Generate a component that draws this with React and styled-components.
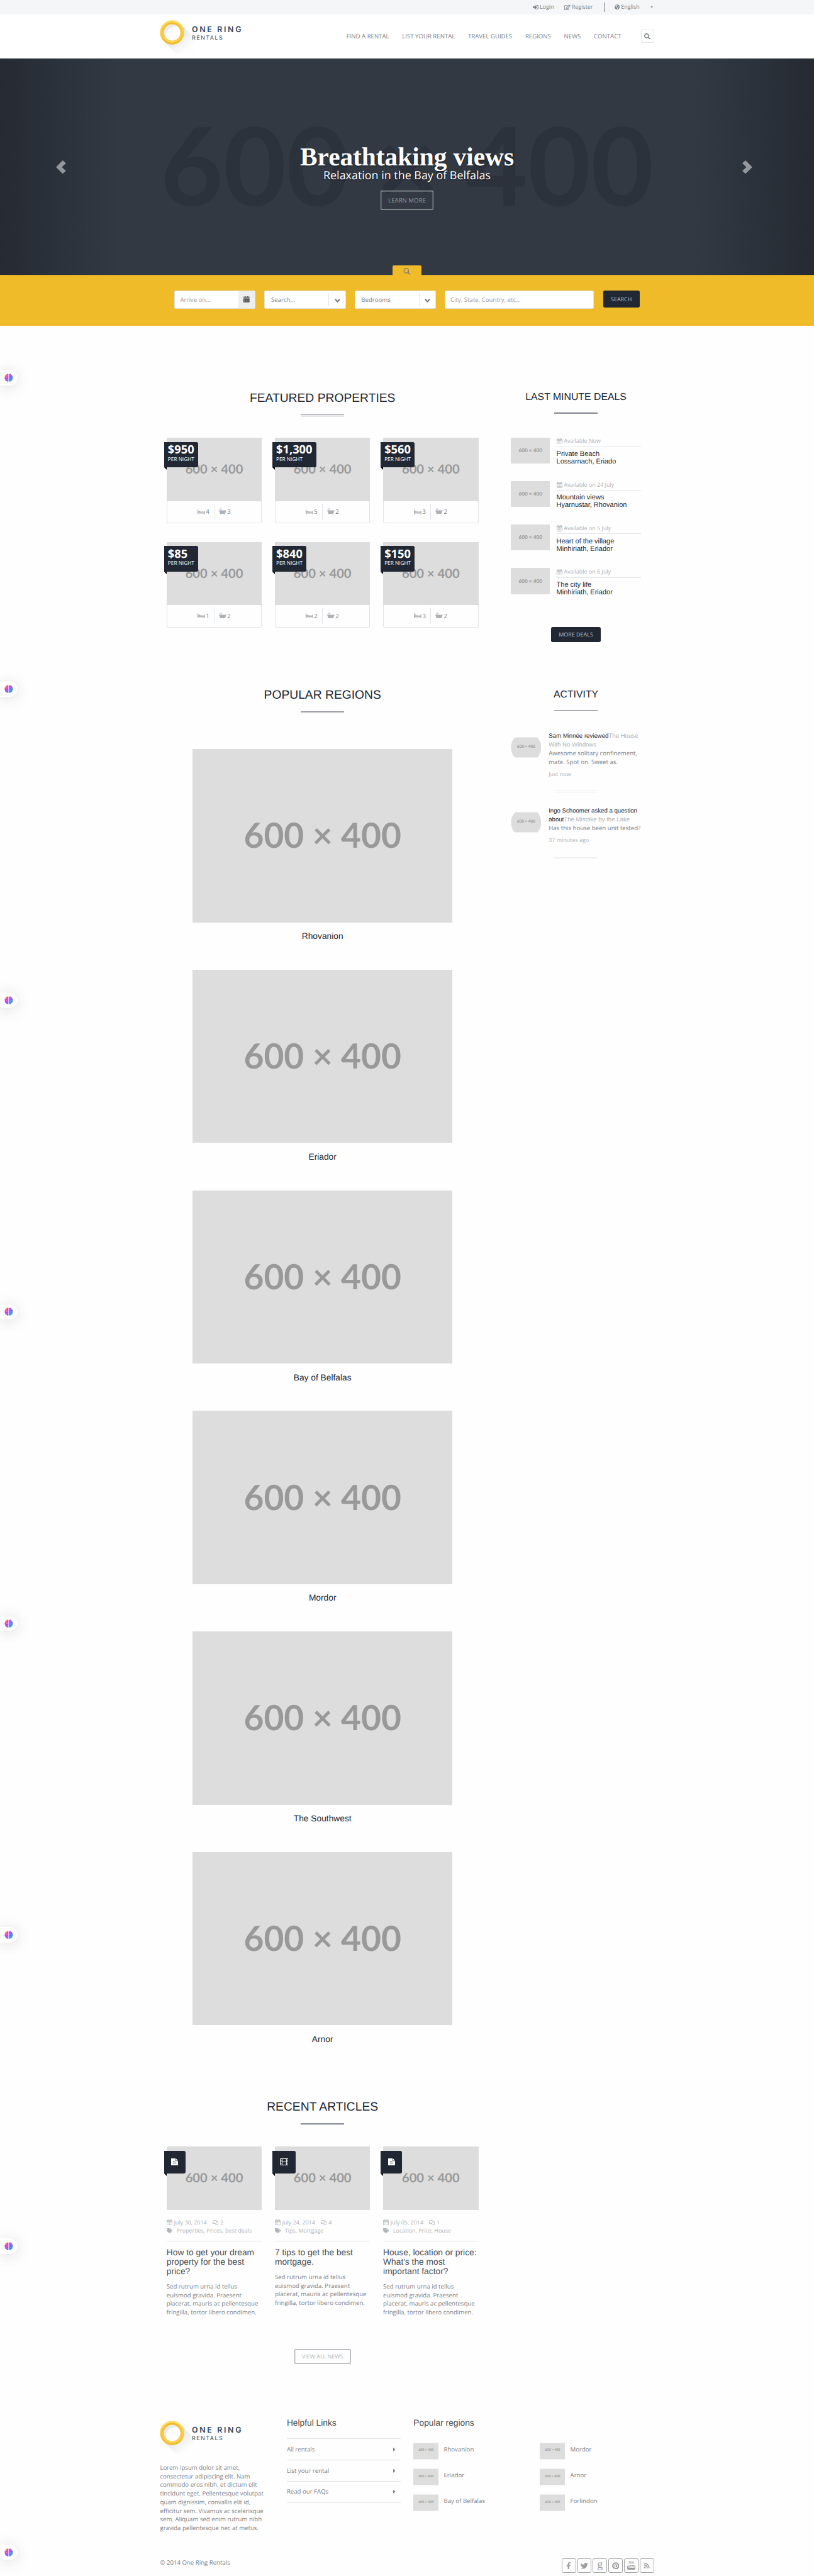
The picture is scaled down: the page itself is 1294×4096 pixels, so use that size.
import React from "react";
import styled, { createGlobalStyle, css } from "styled-components";
import {
  FaSignInAlt,
  FaRegEdit,
  FaGlobeAmericas,
  FaCaretDown,
  FaCaretRight,
  FaSearch,
  FaRegComments,
  FaTags,
  FaFacebookF,
  FaTwitter,
  FaPinterest,
  FaRss,
} from "react-icons/fa";

const ink = "#212833";
const body = "#7b7f86";
const muted = "#adb2b6";
const line = "#e3e4e6";
const gold = "#efbb28";

const sans = `"Open Sans", "Noto Sans", sans-serif`;
const heading = `"Liberation Sans", Arial, sans-serif`;

const GlobalStyle = createGlobalStyle`
  html, body { margin: 0; padding: 0; background: #fefefe; overflow-x: hidden; }
  *, *::before, *::after { box-sizing: border-box; }
  h1, h2, h3, p, ul { margin: 0; padding: 0; font-weight: 400; }
  ul { list-style: none; }
  svg { display: block; flex: none; }
`;

/* The design is drawn on a 1879px wide canvas and scaled down as a whole. */
const Page = styled.div`
  zoom: 0.68866;
  position: relative;
  width: 1879px;
  height: 5947px;
  overflow: hidden;
  background: #fefefe;
  color: ${body};
  font: 14px/20px ${sans};
  text-rendering: geometricPrecision;
  white-space: nowrap;
`;

const Container = styled.div`
  width: 1140px;
  margin: 0 auto;
`;

/* ---------- placeholder image ---------- */

const Placeholder = styled.div`
  width: ${(p) => p.$w}px;
  height: ${(p) => p.$h}px;
  flex: none;
  display: flex;
  align-items: center;
  justify-content: center;
  padding-bottom: ${(p) => p.$w * 0.005}px;
  background: #ddd;
  color: #999;
  font: 700 ${(p) => (p.$w * 80) / 600}px/1 Lato, sans-serif;
  ${(p) =>
    p.$round &&
    css`
      clip-path: circle(35px);
    `}
  ${(p) =>
    p.$edged &&
    css`
      border: solid #eee;
      border-width: 1px 0;
    `}
`;

const Thumb = (props) => <Placeholder {...props}>600 × 400</Placeholder>;

/* ---------- icons ---------- */

const CalendarIcon = ({ size = 14 }) => (
  <svg width={(size * 1664) / 1792} height={size} viewBox="64 0 1664 1792" fill="currentColor">
    <path
      fillRule="evenodd"
      d="M192 1664h288v-288h-288v288zm352 0h320v-288h-320v288zm-352-352h288v-320h-288v320zm352 0h320v-320h-320v320zm-352-384h288v-288h-288v288zm736 736h320v-288h-320v288zm-384-736h320v-288h-320v288zm768 736h288v-288h-288v288zm-384-352h320v-320h-320v320zm-352-864v-288q0-13-9.5-22.5t-22.5-9.5h-64q-13 0-22.5 9.5t-9.5 22.5v288q0 13 9.5 22.5t22.5 9.5h64q13 0 22.5-9.5t9.5-22.5zm736 864h288v-320h-288v320zm-384-384h320v-288h-320v288zm384 0h288v-288h-288v288zm32-480v-288q0-13-9.5-22.5t-22.5-9.5h-64q-13 0-22.5 9.5t-9.5 22.5v288q0 13 9.5 22.5t22.5 9.5h64q13 0 22.5-9.5t9.5-22.5zm384-64v1280q0 52-38 90t-90 38h-1408q-52 0-90-38t-38-90v-1280q0-52 38-90t90-38h128v-96q0-66 47-113t113-47h64q66 0 113 47t47 113v96h384v-96q0-66 47-113t113-47h64q66 0 113 47t47 113v96h128q52 0 90 38t38 90z"
    />
  </svg>
);

const DatePickerIcon = () => (
  <svg width="14" height="14" viewBox="0 0 14 14">
    <path d="M0 1h3V0h2v1h4V0h2v1h3v2.6H0z" fill="#454545" />
    <path d="M0 3.6h14v1.6H0z" fill="#c4c4c4" />
    <path d="M0 5h14v9H0z" fill="#454545" />
    <path d="M1.5 7h11M1.5 9.5h11M1.5 12h11" stroke="#bbb" strokeWidth="1" strokeDasharray="1.4 .8" />
  </svg>
);

const BedIcon = () => (
  <svg width="17" height="12" viewBox="0 0 17 12" fill="currentColor">
    <path d="M0 0h1.4v3.2L5 3.6l2 1.6h8.4V3H17v9h-1.6V9.4H1.6V12H0z" />
    <path d="M2 6.6h13" stroke="#fff" strokeWidth=".7" />
  </svg>
);

const BathIcon = () => (
  <svg width="17" height="14" viewBox="0 0 17 14" fill="currentColor">
    <path d="M0 5.200h17v1.500h-.8l-1.400 5c-.2.700-.6 1-1.200 1.100V14h-1.400v-1.100H4.800V14H3.400v-1.200c-.6-.1-1-.5-1.200-1.100l-1.400-5H0z" />
    <path d="M2.600 5.400V2.200C2.600 1.200 3.200.8 4 .8s1.400.5 1.500 1.200" fill="none" stroke="currentColor" strokeWidth="1.200" />
    <path d="M4 2.400L6.500 1.300l.4 1.500-2.300 1z" />
  </svg>
);

const FilmIcon = () => (
  <svg width="20" height="16" viewBox="0 0 20 16" fill="none" stroke="#fff">
    <rect x=".8" y=".8" width="18.4" height="14.4" rx="1" strokeWidth="1.5" />
    <path d="M5 1v14M15 1v14M5 8h10" strokeWidth="1.5" />
    <path d="M1 4.4h4M1 8h4M1 11.6h4M15 4.4h4M15 8h4M15 11.6h4" strokeWidth="1" />
  </svg>
);

const DocumentIcon = () => (
  <svg width="16" height="16" viewBox="0 0 16 16">
    <path d="M0 0h10v6h6v10H0z" fill="#fff" />
    <path d="M11 0l5 5h-5z" fill="#fff" />
    <path d="M4 7.7h5M4 10.6h8" stroke={ink} strokeWidth="1.2" />
  </svg>
);

const Chevron = () => (
  <svg width="13" height="9" viewBox="0 0 13 9" fill="#6d7177">
    <path d="M0 1.6L2 0l4.5 4.2L11 0l2 1.6L6.5 9z" />
  </svg>
);

const SlideArrow = ({ flip }) => (
  <svg width="23" height="31" viewBox="0 0 23 31" fill="#94979c">
    <path
      transform={flip ? "matrix(-1 0 0 1 23 0)" : undefined}
      d="M15.5 0L23 6.5 13.6 15.5 23 24.5 15.5 31 0 15.5z"
    />
  </svg>
);

const BrainIcon = () => (
  <svg width="20" height="19" viewBox="0 0 20 19">
    <defs>
      <linearGradient id="brain" gradientUnits="userSpaceOnUse" x1="1" y1="2" x2="18" y2="17">
        <stop offset="0.05" stopColor="#ff9a1f" />
        <stop offset="0.3" stopColor="#e03ad0" />
        <stop offset="0.58" stopColor="#8257ee" />
        <stop offset="0.95" stopColor="#16a4ff" />
      </linearGradient>
    </defs>
    <path
      fill="url(#brain)"
      d="M9.3 1v17.2C7 19 5 18.2 4.300 16.500 2.500 16.400 1.500 14.800 1.900 13.200.3 12 0 10.500.8 9.500 0 8 .5 6.500 1.900 5.800 1.600 4.200 2.600 2.800 4.200 2.600 5 .8 7.300.2 9.300 1z"
    />
    <path
      fill="url(#brain)"
      d="M10.700 1c2-.8 4.300 0 5.100 1.600 1.600.2 2.600 1.600 2.300 3.200 1.400.7 1.900 2.200 1.100 3.700.8 1 .5 2.500-1.100 3.700.4 1.600-.6 3.200-2.400 3.300-.7 1.700-2.700 2.500-5 1.700z"
    />
    <path
      d="M3 9.700h6M4.500 6c1.500 0 2-.8 3-1.500M5 14.500c1 0 1.500-1 3-.6M13 4l2 1.500 1.500-.8M12.500 8.500c1.500 1.200 2.500 1.200 4 .2M13 13.500l2-1.500 1 1.200"
      stroke="#fff"
      strokeOpacity=".6"
      strokeWidth=".8"
      fill="none"
    />
  </svg>
);

const Logo = ({ id }) => (
  <svg width="190" height="80" viewBox="0 0 190 80">
    <defs>
      <linearGradient id={`${id}-shade`} x1="0.2" y1="0.2" x2="0.75" y2="0.85">
        <stop offset="0" stopColor="#dcdedf" />
        <stop offset="1" stopColor="#fefefe" />
      </linearGradient>
      <linearGradient id={`${id}-gold`} x1="0" y1="0" x2="0" y2="1">
        <stop offset="0" stopColor="#fbdb60" />
        <stop offset="1" stopColor="#f1bd2c" />
      </linearGradient>
      <linearGradient id={`${id}-inner`} x1="0" y1="0" x2="0" y2="1">
        <stop offset="0" stopColor="#f0b92b" />
        <stop offset="1" stopColor="#fcd75a" />
      </linearGradient>
    </defs>
    <path d="M12 51L39 79h40V41L50 11z" fill={`url(#${id}-shade)`} />
    <circle cx="28.500" cy="28.500" r="22" fill="#fefefe" />
    <path d="M12 40A20 20 0 0 1 46 17 22 22 0 0 0 15 42z" fill="#e9eaeb" />
    <circle cx="28.500" cy="28.500" r="23.500" fill="none" stroke={`url(#${id}-gold)`} strokeWidth="9" />
    <circle cx="28.500" cy="28.500" r="21.500" fill="none" stroke={`url(#${id}-inner)`} strokeWidth="4" />
    <text x="74" y="27" fill="#2f475e" fontFamily="Inter, sans-serif" fontSize="18" fontWeight="600" textLength="114">
      ONE RING
    </text>
    <text x="74" y="45" fill="#2f475e" fontFamily="Inter, sans-serif" fontSize="13" fontWeight="400" textLength="71">
      RENTALS
    </text>
  </svg>
);

/* ---------- top bar and header ---------- */

const TopBar = styled.div`
  height: 33px;
  background: #f4f6f8;
`;

const TopLinks = styled(Container)`
  display: flex;
  justify-content: flex-end;
  align-items: center;
  height: 33px;
  font-size: 13px;
`;

const TopLink = styled.span`
  display: flex;
  align-items: center;
  gap: 3px;
  margin-left: 24px;
`;

const TopDivider = styled.span`
  width: 1px;
  height: 22px;
  margin-left: 25px;
  background: #777b82;
`;

const Header = styled.header`
  height: 102px;
  background: #fff;
`;

const HeaderRow = styled(Container)`
  display: flex;
  align-items: flex-start;
  padding-top: 14px;
`;

const Nav = styled.nav`
  display: flex;
  gap: 30px;
  margin: 26.500px 45.500px 0 auto;
`;

const NavSearch = styled.span`
  display: flex;
  align-items: center;
  justify-content: center;
  width: 30px;
  height: 30px;
  margin-top: 21.500px;
  border: 1px solid #e3e4e6;
  border-radius: 3px;
`;

/* ---------- hero ---------- */

const Hero = styled.section`
  position: relative;
  display: flex;
  flex-direction: column;
  align-items: center;
  height: 500px;
  overflow: hidden;
  background: linear-gradient(
    to right,
    #262a31 0,
    #2b313b 120px,
    #333943 275px,
    #333943 1604px,
    #2b313b 1759px,
    #262a31 100%
  );
`;

const HeroBackdrop = styled.div`
  position: absolute;
  inset: 0;
  display: flex;
  align-items: center;
  justify-content: center;
  padding-bottom: 12px;
  color: #2c323c;
  font: 700 250.500px/1 Lato, sans-serif;
`;

const HeroTitle = styled.h1`
  position: relative;
  margin-top: 197px;
  color: #fff;
  font: 700 60px/60px "Liberation Serif", "Times New Roman", serif;
  text-shadow: 0 1px 3px rgba(0, 0, 0, 0.6);
`;

const HeroText = styled.p`
  position: relative;
  color: #fff;
  font-size: 26px;
  line-height: 36px;
  margin-top: -4px;
  text-shadow: 0 1px 3px rgba(0, 0, 0, 0.6);
`;

const GhostButton = styled.span`
  position: relative;
  display: flex;
  align-items: center;
  justify-content: center;
  width: ${(p) => p.$w}px;
  height: ${(p) => p.$h}px;
  box-shadow: inset 0 0 0 2px ${(p) => p.$color};
  border-radius: 3px;
  color: ${(p) => p.$color};
  font-size: ${(p) => p.$size}px;
`;

const HeroButton = styled(GhostButton)`
  margin-top: 16px;
`;

const ArrowSlot = styled.span`
  position: absolute;
  top: 235px;
  ${(p) => p.$side}: ${(p) => p.$offset}px;
`;

/* ---------- search ---------- */

const SearchBar = styled.section`
  position: relative;
  display: flex;
  align-items: flex-start;
  justify-content: center;
  gap: 20.500px;
  height: 117px;
  padding-top: 35px;
  background: ${gold};
  border-top: 1px solid #cda32b;
`;

const SearchTab = styled.span`
  position: absolute;
  top: -23.500px;
  left: 905.500px;
  display: flex;
  justify-content: center;
  width: 68px;
  height: 25px;
  padding-top: 5px;
  border-radius: 3px 3px 0 0;
  background: ${gold};
`;

const Field = styled.div`
  display: flex;
  align-items: center;
  width: ${(p) => p.$w}px;
  height: 41px;
  padding-left: ${(p) => p.$pad}px;
  background: #fff;
  border: 1px solid #e0e1e3;
  border-radius: 3px;
  color: ${(p) => (p.$dim ? "#9c9c9c" : body)};
  overflow: hidden;
`;

const Addon = styled.span`
  display: flex;
  align-items: center;
  justify-content: center;
  width: 38px;
  height: 41px;
  margin-left: auto;
  padding-bottom: 2px;
  background: #eee;
`;

const SelectArrow = styled.span`
  display: flex;
  align-items: center;
  justify-content: center;
  width: 38px;
  height: 31px;
  margin-left: auto;
  padding-top: 6px;
  border-left: 1px solid #e4e4e4;
`;

const SolidButton = styled.span`
  display: flex;
  align-items: center;
  justify-content: center;
  width: ${(p) => p.$w}px;
  height: ${(p) => p.$h}px;
  border-radius: 4px;
  background: ${ink};
  color: #bec1c4;
  font-size: 13px;
`;

/* ---------- main columns ---------- */

const Main = styled(Container)`
  display: flex;
  justify-content: space-between;
  height: 4831.400px;
  padding-top: 152.900px;
`;

const Primary = styled.div`
  display: flex;
  flex-direction: column;
  align-items: center;
  width: 750px;
`;

const Sidebar = styled.aside`
  display: flex;
  flex-direction: column;
  align-items: center;
  width: 360px;
  margin-top: 0.500px;
`;

const Title = styled.h2`
  color: ${ink};
  font-family: ${heading};
  font-size: ${(p) => p.$size}px;
  line-height: 1.1;
`;

const Rule = styled.div`
  width: 100px;
  height: 4px;
  margin: ${(p) => p.$before}px 0 ${(p) => p.$after}px;
  border: solid ${(p) => (p.$light ? "#eeeff0" : "#8e929a")};
  border-width: 1px 0 ${(p) => (p.$single ? 0 : 1)}px;
`;

const CardGrid = styled.div`
  display: grid;
  grid-template-columns: repeat(3, 220px);
  gap: ${(p) => p.$rowGap}px 30px;
`;

const Card = styled.article`
  position: relative;
`;

const RoomInfo = styled.div`
  display: flex;
  align-items: center;
  justify-content: center;
  height: 51px;
  border: 1px solid ${line};
  border-top: 0;
  border-radius: 0 0 4px 4px;
`;

const Rooms = styled.span`
  display: flex;
  align-items: center;
  justify-content: ${(p) => (p.$end ? "flex-end" : "flex-start")};
  gap: 2px;
  width: 50%;
  height: 38px;
  padding: ${(p) => (p.$end ? "0 10px 0 0" : "0 0 0 11px")};
  ${(p) => p.$end && `border-right: 1px solid ${line};`}

  svg {
    color: ${muted};
    margin-bottom: ${(p) => (p.$end ? 1 : 3)}px;
  }
`;

const Tag = styled.div`
  position: absolute;
  top: 10px;
  left: -6px;
  background: ${ink};
  color: #fff;
  border-radius: 0 4px 4px 0;

  &::after {
    content: "";
    position: absolute;
    top: 100%;
    left: 0;
    border: solid transparent;
    border-width: 0 6px 6px 0;
    border-right-color: #000;
  }
`;

const PriceTag = styled(Tag)`
  height: 58.500px;
  padding: 0 9px;
  font-size: 12px;
  line-height: 15px;
`;

const Price = styled.div`
  padding-top: 2px;
  font-size: 26.600px;
  font-weight: 700;
  line-height: 31px;
`;

const KindTag = styled(Tag)`
  display: flex;
  align-items: center;
  justify-content: center;
  width: ${(p) => p.$w}px;
  height: 52px;
`;

const Region = styled.figure`
  display: flex;
  flex-direction: column;
  align-items: center;
  gap: 21px;
  margin: 0 0 66.400px;
  color: ${ink};
  font: 20px/22px ${heading};
`;

const Spacer = styled.div`
  height: ${(p) => p.$h}px;
  flex: none;
`;

const Meta = styled.div`
  padding: 18.900px 0 13.700px;
  border-bottom: 1px solid ${line};
  color: ${muted};
  font-size: 13px;
  line-height: 19.500px;
`;

const MetaRow = styled.div`
  display: flex;
  align-items: center;
  gap: ${(p) => p.$gap}px;
`;

const MetaDate = styled.span`
  margin-right: 9px;
`;

const ArticleTitle = styled.h3`
  margin: 14.400px 0 13.800px;
  color: #4b4e53;
  font: 20px/22px ${heading};
  white-space: pre-line;
`;

const Copy = styled.p`
  white-space: pre-line;
`;

/* ---------- sidebar items ---------- */

const Deal = styled.article`
  display: flex;
  gap: 15px;
  width: 300px;
  height: 100.600px;
`;

const DealText = styled.div`
  flex: 1;
  color: ${ink};
  font: 16px/17.600px ${heading};
`;

const DealDate = styled.div`
  display: flex;
  align-items: center;
  gap: 4px;
  height: 22px;
  margin-bottom: 7.700px;
  padding-bottom: 3px;
  border-bottom: 1px solid ${line};
  color: ${muted};
  font: 13px/18px ${sans};
`;

const Activity = styled.article`
  display: flex;
  gap: 17px;
  width: 300px;
`;

const Avatar = styled.div`
  padding-top: 11.700px;
`;

const ActivityTitle = styled.h3`
  color: ${muted};
  font: 14px/19.600px ${heading};
  white-space: pre-line;
`;

const Who = styled.span`
  color: ${ink};
`;

const When = styled.div`
  margin-top: 7.400px;
  color: ${muted};
  font-size: 13px;
`;

/* ---------- footer ---------- */

const Footer = styled(Container)`
  display: grid;
  grid-template-columns: 262.500px 262.500px 1fr;
  column-gap: 30px;
  height: 324.200px;
`;

const FooterTitle = styled.h3`
  color: #4b4e53;
  font: 20px/22px ${heading};
`;

const AboutColumn = styled.div`
  padding-top: 5.600px;
`;

const About = styled(Copy)`
  margin-top: 18.600px;
`;

const LinkList = styled.ul`
  margin-top: 24.900px;
  border-top: 1px solid ${line};
`;

const LinkItem = styled.li`
  display: flex;
  align-items: center;
  justify-content: space-between;
  height: 49px;
  padding-right: 8px;
  border-bottom: 1px solid ${line};
`;

const RegionGrid = styled.div`
  display: grid;
  grid-template-columns: 292px 1fr;
  grid-auto-rows: 60px;
  margin-top: 33.900px;
`;

const RegionLink = styled.div`
  display: flex;
  gap: 12px;
  line-height: 33px;
`;

const Bottom = styled(Container)`
  display: flex;
  justify-content: space-between;
`;

const Socials = styled.div`
  display: flex;
  gap: 3px;
`;

const Social = styled.span`
  display: flex;
  flex-direction: column;
  align-items: center;
  justify-content: center;
  width: 33px;
  height: 33px;
  border: 1px solid #a3a3a3;
  border-radius: 4px;
  color: #9d9d9d;
`;

const GoogleMark = styled.span`
  font: 26px/20px "Liberation Serif", serif;
  margin-top: -6px;
`;

const TubeTop = styled.span`
  font: 700 8px/8px "Liberation Sans", sans-serif;
  letter-spacing: -0.5px;
`;

const TubeBottom = styled.span`
  padding: 1px 1px;
  border-radius: 3px;
  background: #9d9d9d;
  color: #fff;
  font: 700 8px/9px "Liberation Sans", sans-serif;
  letter-spacing: -0.5px;
`;

/* ---------- floating widget ---------- */

const WidgetWindow = styled.div`
  position: absolute;
  left: 0;
  top: ${(p) => p.$y - 60}px;
  width: 90px;
  height: 107px;
  padding-top: 42px;
  overflow: hidden;
`;

const Widget = styled.div`
  display: flex;
  align-items: center;
  width: 40px;
  height: 36px;
  padding-left: 10px;
  border-radius: 0 18px 18px 0;
  background: #fff;
  box-shadow: 0 4px 34px rgba(0, 0, 0, 0.13), 0 0 2px rgba(0, 0, 0, 0.08);
`;

/* ---------- data ---------- */

const navItems = ["FIND A RENTAL", "LIST YOUR RENTAL", "TRAVEL GUIDES", "REGIONS", "NEWS", "CONTACT"];

const properties = [
  ["$950", 4, 3],
  ["$1,300", 5, 2],
  ["$560", 3, 2],
  ["$85", 1, 2],
  ["$840", 2, 2],
  ["$150", 3, 2],
];

const deals = [
  ["Available Now", "Private Beach", "Lossarnach, Eriado"],
  ["Available on 24 July", "Mountain views", "Hyarnustar, Rhovanion"],
  ["Available on 5 July", "Heart of the village", "Minhiriath, Eriador"],
  ["Available on 6 July", "The city life", "Minhiriath, Eriador"],
];

const regions = ["Rhovanion", "Eriador", "Bay of Belfalas", "Mordor", "The Southwest", "Arnor"];

const excerpt =
  "Sed rutrum urna id tellus\neuismod gravida. Praesent\nplacerat, mauris ac pellentesque\nfringilla, tortor libero condimen.";

const articles = [
  {
    date: "July 30, 2014",
    comments: 2,
    tags: "Properties, Prices, best deals",
    title: "How to get your dream\nproperty for the best\nprice?",
  },
  {
    film: true,
    date: "July 24, 2014",
    comments: 4,
    tags: "Tips, Mortgage",
    title: "7 tips to get the best\nmortgage.",
  },
  {
    date: "July 05, 2014",
    comments: 1,
    tags: "Location, Price, House",
    title: "House, location or price:\nWhat's the most\nimportant factor?",
  },
];

const about =
  "Lorem ipsum dolor sit amet,\nconsectetur adipiscing elit. Nam\ncommodo eros nibh, et dictum elit\ntincidunt eget. Pellentesque volutpat\nquam dignissim, convallis elit id,\nefficitur sem. Vivamus ac scelerisque\nsem. Aliquam sed enim rutrum nibh\ngravida pellentesque nec at metus.";

const footerRegions = ["Rhovanion", "Mordor", "Eriador", "Arnor", "Bay of Belfalas", "Forlindon"];

const widgetCenters = [872, 1591, 2310, 3029, 3748, 4467, 5186, 5893];

export default function App() {
  return (
    <>
      <GlobalStyle />
      <Page>
        <TopBar>
          <TopLinks>
            <TopLink>
              <FaSignInAlt size={13} /> Login
            </TopLink>
            <TopLink>
              <FaRegEdit size={14} /> Register
            </TopLink>
            <TopDivider />
            <TopLink>
              <FaGlobeAmericas size={12} /> English
            </TopLink>
            <TopLink>
              <FaCaretDown size={9} />
            </TopLink>
          </TopLinks>
        </TopBar>

        <Header>
          <HeaderRow>
            <Logo id="top" />
            <Nav>
              {navItems.map((item) => (
                <span key={item}>{item}</span>
              ))}
            </Nav>
            <NavSearch>
              <FaSearch size={14} />
            </NavSearch>
          </HeaderRow>
        </Header>

        <Hero>
          <HeroBackdrop>600 × 400</HeroBackdrop>
          <HeroTitle>Breathtaking views</HeroTitle>
          <HeroText>Relaxation in the Bay of Belfalas</HeroText>
          <HeroButton $w={122} $h={45} $size={14} $color="#96999e">
            LEARN MORE
          </HeroButton>
          <ArrowSlot $side="left" $offset={129}>
            <SlideArrow />
          </ArrowSlot>
          <ArrowSlot $side="right" $offset={143}>
            <SlideArrow flip />
          </ArrowSlot>
        </Hero>

        <SearchBar>
          <SearchTab>
            <svg width="16" height="16" viewBox="0 0 16 16" fill="none" stroke="#77797b">
              <circle cx="7" cy="6.500" r="5.300" strokeWidth="1.900" />
              <path d="M11 10.800l4 4.200" strokeWidth="2.400" />
            </svg>
          </SearchTab>
          <Field $w={187.5} $pad={12} $dim>
            Arrive on...
            <Addon>
              <DatePickerIcon />
            </Addon>
          </Field>
          <Field $w={187.5} $pad={14}>
            Search...
            <SelectArrow>
              <Chevron />
            </SelectArrow>
          </Field>
          <Field $w={187.5} $pad={14}>
            Bedrooms
            <SelectArrow>
              <Chevron />
            </SelectArrow>
          </Field>
          <Field $w={345} $pad={12} $dim>
            City, State, Country, etc...
          </Field>
          <SolidButton $w={84.5} $h={39}>
            SEARCH
          </SolidButton>
        </SearchBar>

        <Main>
          <Primary>
            <Title $size={28}>FEATURED PROPERTIES</Title>
            <Rule $before={21.3} $after={50} />
            <CardGrid $rowGap={42.8}>
              {properties.map(([price, beds, baths]) => (
                <Card key={price}>
                  <Thumb $w={220} $h={146.5} />
                  <PriceTag>
                    <Price>{price}</Price>
                    PER NIGHT
                  </PriceTag>
                  <RoomInfo>
                    <Rooms $end>
                      <BedIcon />
                      {beds}
                    </Rooms>
                    <Rooms>
                      <BathIcon />
                      {baths}
                    </Rooms>
                  </RoomInfo>
                </Card>
              ))}
            </CardGrid>

            <Spacer $h={142.1} />
            <Title $size={28}>POPULAR REGIONS</Title>
            <Rule $before={20.6} $after={83.5} />
            {regions.map((name) => (
              <Region key={name}>
                <Thumb $w={600} $h={400} />
                {name}
              </Region>
            ))}

            <Spacer $h={64.7} />
            <Title $size={28}>RECENT ARTICLES</Title>
            <Rule $before={21.6} $after={49.5} />
            <CardGrid $rowGap={0}>
              {articles.map((a) => (
                <Card key={a.title}>
                  <Thumb $w={220} $h={146} />
                  <KindTag $w={a.film ? 54 : 50}>{a.film ? <FilmIcon /> : <DocumentIcon />}</KindTag>
                  <Meta>
                    <MetaRow $gap={4}>
                      <CalendarIcon size={14} />
                      <MetaDate>{a.date}</MetaDate>
                      <FaRegComments size={14} />
                      {a.comments}
                    </MetaRow>
                    <MetaRow $gap={9}>
                      <FaTags size={14} />
                      {a.tags}
                    </MetaRow>
                  </Meta>
                  <ArticleTitle>{a.title}</ArticleTitle>
                  <Copy>{excerpt}</Copy>
                </Card>
              ))}
            </CardGrid>
            <Spacer $h={73.6} />
            <GhostButton $w={131} $h={35} $size={13} $color={muted}>
              VIEW ALL NEWS
            </GhostButton>
          </Primary>

          <Sidebar>
            <Title $size={23}>LAST MINUTE DEALS</Title>
            <Rule $before={20.9} $after={54.5} />
            {deals.map(([when, name, place]) => (
              <Deal key={name}>
                <Thumb $w={90} $h={60} />
                <DealText>
                  <DealDate>
                    <CalendarIcon size={14} />
                    {when}
                  </DealDate>
                  {name}
                  <br />
                  {place}
                </DealText>
              </Deal>
            ))}
            <Spacer $h={35.7} />
            <SolidButton $w={115} $h={35}>
              MORE DEALS
            </SolidButton>

            <Spacer $h={109.2} />
            <Title $size={23}>ACTIVITY</Title>
            <Rule $before={22.6} $after={46.3} $single />
            <Activity>
              <Avatar>
                <Thumb $w={70} $h={47.3} $round $edged />
              </Avatar>
              <div>
                <ActivityTitle>
                  <Who>Sam Minnée reviewed</Who>
                  {"The House\nWith No Windows"}
                </ActivityTitle>
                <Copy>{"Awesome solitary confinement,\nmate. Spot on. Sweet as."}</Copy>
                <When>Just now</When>
              </div>
            </Activity>
            <Rule $before={28.3} $after={34.4} $light />
            <Activity>
              <Avatar>
                <Thumb $w={70} $h={47.3} $round $edged />
              </Avatar>
              <div>
                <ActivityTitle>
                  <Who>{"Ingo Schoomer asked a question\nabout"}</Who>
                  The Mistake by the Lake
                </ActivityTitle>
                <Copy>Has this house been unit tested?</Copy>
                <When>37 minutes ago</When>
              </div>
            </Activity>
            <Rule $before={28.3} $after={0} $light />
          </Sidebar>
        </Main>

        <Footer>
          <AboutColumn>
            <Logo id="bottom" />
            <About>{about}</About>
          </AboutColumn>
          <div>
            <FooterTitle>Helpful Links</FooterTitle>
            <LinkList>
              {["All rentals", "List your rental", "Read our FAQs"].map((item) => (
                <LinkItem key={item}>
                  {item}
                  <FaCaretRight size={14} />
                </LinkItem>
              ))}
            </LinkList>
          </div>
          <div>
            <FooterTitle>Popular regions</FooterTitle>
            <RegionGrid>
              {footerRegions.map((name) => (
                <RegionLink key={name}>
                  <Thumb $w={58} $h={39.3} $edged />
                  {name}
                </RegionLink>
              ))}
            </RegionGrid>
          </div>
        </Footer>

        <Bottom>
          <span>© 2014 One Ring Rentals</span>
          <Socials>
            <Social>
              <FaFacebookF size={17} />
            </Social>
            <Social>
              <FaTwitter size={17} />
            </Social>
            <Social>
              <GoogleMark>g</GoogleMark>
            </Social>
            <Social>
              <FaPinterest size={17} />
            </Social>
            <Social>
              <TubeTop>You</TubeTop>
              <TubeBottom>Tube</TubeBottom>
            </Social>
            <Social>
              <FaRss size={15} />
            </Social>
          </Socials>
        </Bottom>

        {widgetCenters.map((y) => (
          <WidgetWindow key={y} $y={y}>
            <Widget>
              <BrainIcon />
            </Widget>
          </WidgetWindow>
        ))}
      </Page>
    </>
  );
}
